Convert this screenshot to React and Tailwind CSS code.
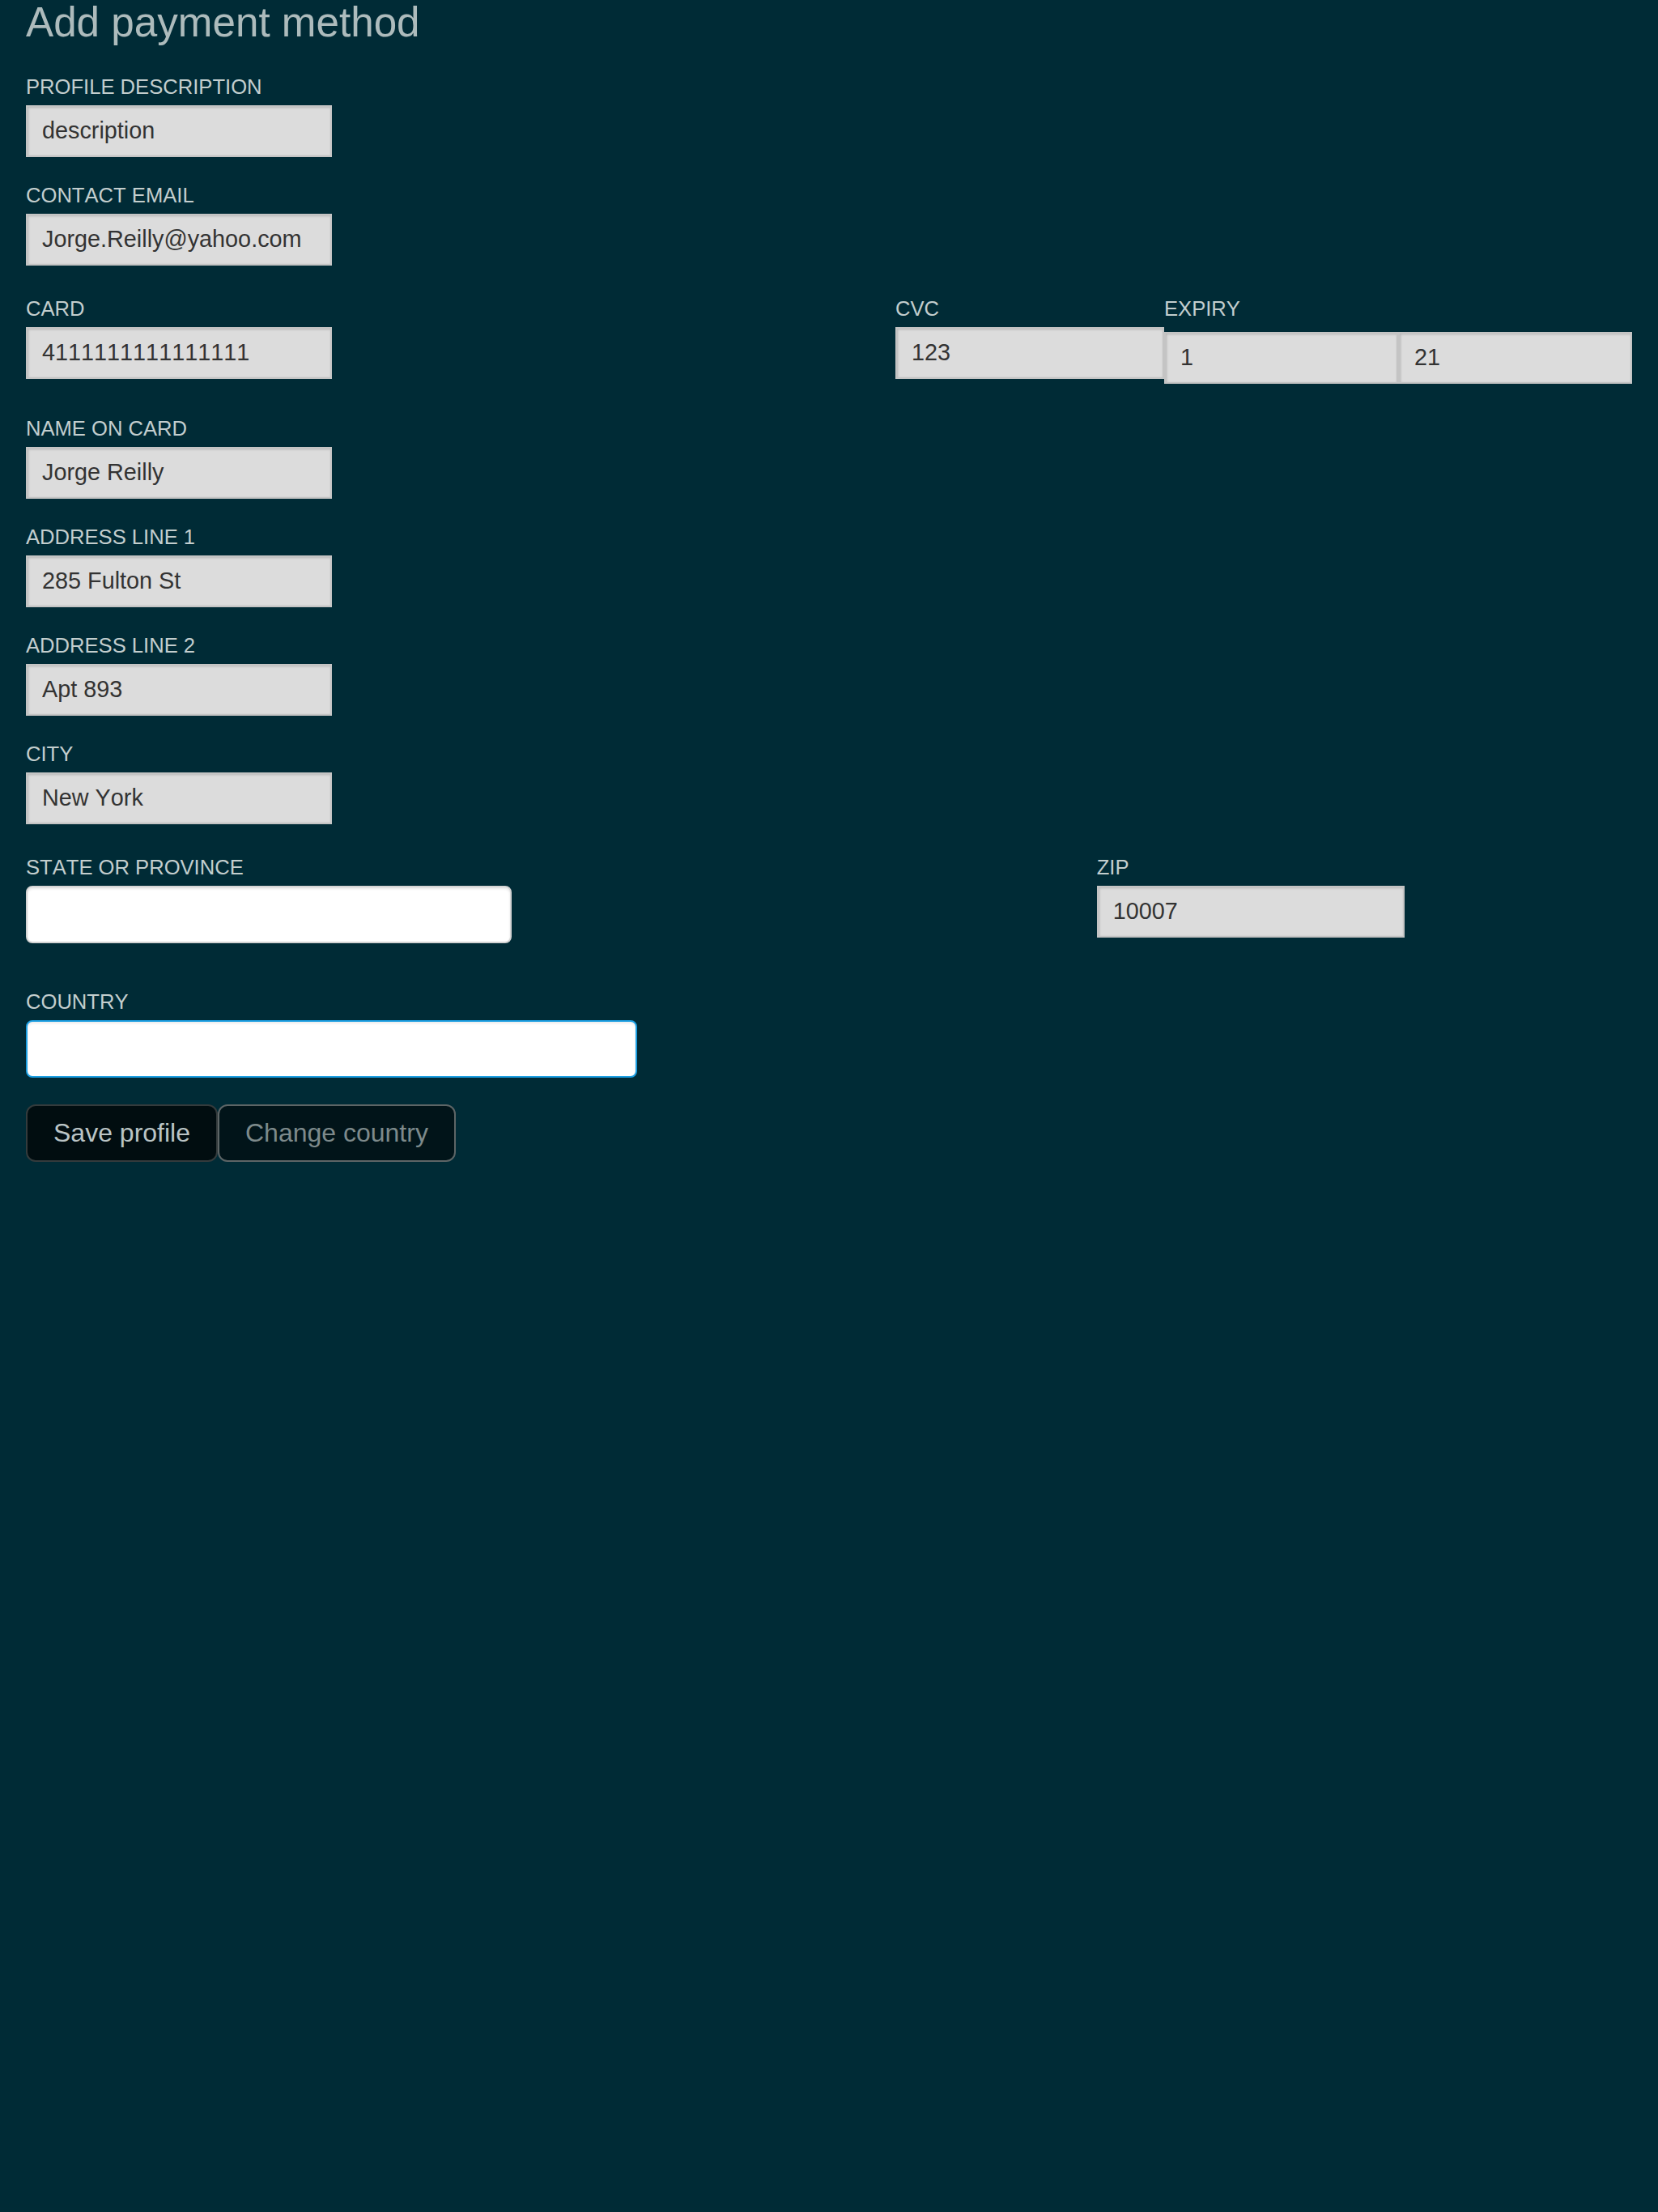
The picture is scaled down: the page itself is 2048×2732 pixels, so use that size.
import React from "react";

const font = "font-['Liberation_Sans',Arial,sans-serif] [font-kerning:none]";

const Label = ({ children }) => (
  <label className="block text-[25.6px] leading-[30px] mb-[8px] text-[#c3cece] uppercase">
    {children}
  </label>
);

const GreyInput = ({ value, className = "" }) => (
  <input
    readOnly
    defaultValue={value}
    className={`block h-[64px] border-2 border-[#c4c4c4] bg-[#dcdcdc] pl-[18px] pb-[2px] text-[28.8px] text-[#333333] shadow-[inset_1px_1px_3px_rgba(0,0,0,0.18)] outline-none ${font} ${className}`}
  />
);

const Field = ({ label, value, className = "" }) => (
  <div className={className}>
    <Label>{label}</Label>
    <GreyInput value={value} className="w-[378px]" />
  </div>
);

export default function App() {
  return (
    <div className={`min-h-screen bg-[#002b36] px-8 ${font}`}>
      <h1 className="text-[51.2px] leading-[55px] text-[#adbbbc] font-normal">
        Add payment method
      </h1>

      <Field label="Profile description" value="description" className="mt-[37px]" />
      <Field label="Contact email" value="Jorge.Reilly@yahoo.com" className="mt-[32px]" />

      <div className="mt-[38px] flex">
        <div className="flex-1">
          <Label>Card</Label>
          <GreyInput value="4111111111111111" className="w-[378px]" />
        </div>
        <div className="w-[332px]">
          <Label>CVC</Label>
          <GreyInput value="123" className="w-full" />
        </div>
        <div className="w-[578px]">
          <Label>Expiry</Label>
          <div className="flex pt-[6px]">
            <GreyInput value="1" className="w-1/2" />
            <GreyInput value="21" className="w-1/2" />
          </div>
        </div>
      </div>

      <Field label="Name on card" value="Jorge Reilly" className="mt-[40px]" />
      <Field label="Address line 1" value="285 Fulton St" className="mt-[32px]" />
      <Field label="Address line 2" value="Apt 893" className="mt-[32px]" />
      <Field label="City" value="New York" className="mt-[32px]" />

      <div className="mt-[38px] flex">
        <div className="w-2/3">
          <Label>State or province</Label>
          <input
            className="block h-[71px] w-[600px] rounded-[8px] border-2 border-[#d4d4d4] bg-white px-4 text-[28.8px] shadow-[inset_0_2px_3px_rgba(0,0,0,0.1)] outline-none"
          />
        </div>
        <div className="flex-1">
          <Label>Zip</Label>
          <GreyInput value="10007" className="w-[380px]" />
        </div>
      </div>

      <div className="mt-[57px]">
        <Label>Country</Label>
        <input
          className="block h-[71px] w-[755px] rounded-[8px] border-2 border-[#1b9fe3] bg-white px-4 text-[28.8px] shadow-[inset_0_2px_3px_rgba(0,0,0,0.08)] outline-none"
        />
      </div>

      <div className="mt-[33px] flex">
        <button className="h-[71px] rounded-[12px] border-2 border-[#343b3c] bg-[#010d10] px-8 pb-[2px] text-[32px] text-[#bac4c5]">
          Save profile
        </button>
        <button className="h-[71px] rounded-[12px] border-2 border-[#5d6566] bg-[#011419] px-8 pb-[2px] text-[32px] text-[#7d8a8b]">
          Change country
        </button>
      </div>
    </div>
  );
}
